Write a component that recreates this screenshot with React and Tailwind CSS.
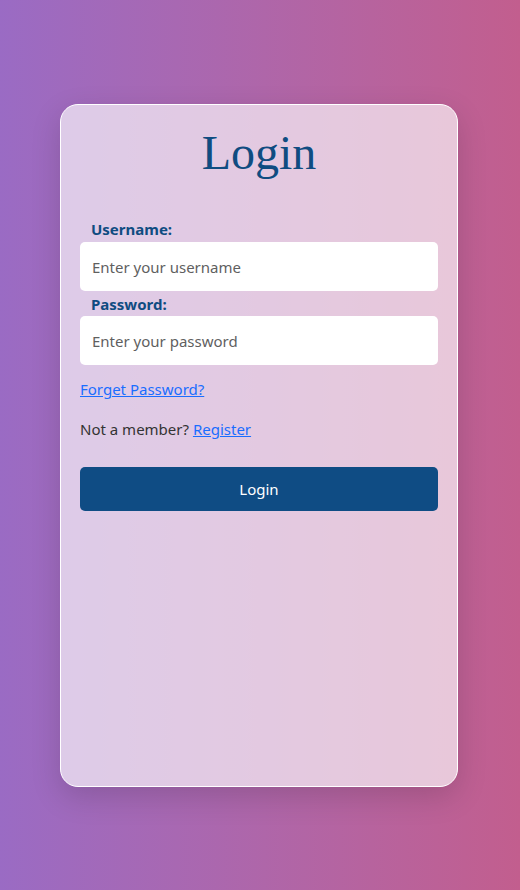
export default function App() {
  return (
    <div
      className="w-[520px] h-[890px] flex justify-center bg-gradient-to-r from-[#9a6bc4] to-[#c25e8e]"
      style={{ fontFamily: '"Noto Sans", "Open Sans", sans-serif' }}
    >
      <div className="mt-[104px] mr-[2px] w-[398px] h-[683px] rounded-[18px] border border-white bg-white/65 shadow-[0_10px_30px_rgba(0,0,0,0.15)] px-[19px] flex flex-col">
        <h1
          className="text-center text-[48px] leading-none text-[#0f4c81] mt-[24px]"
          style={{ fontFamily: '"Liberation Serif", "Times New Roman", serif' }}
        >
          Login
        </h1>
        <label className="mt-[42px] pl-[11px] text-[15px] font-bold text-[#0f4c81] leading-[20px]">
          Username:
        </label>
        <input
          className="mt-[3px] h-[49px] w-full rounded-[5px] bg-white px-[12px] text-[15px] text-[#555] placeholder:text-[#5f5f5f] outline-none"
          placeholder="Enter your username"
        />
        <label className="mt-[3px] pl-[11px] text-[15px] font-bold text-[#0f4c81] leading-[20px]">
          Password:
        </label>
        <input
          type="password"
          className="mt-[2px] h-[49px] w-full rounded-[5px] bg-white px-[12px] text-[15px] text-[#555] placeholder:text-[#5f5f5f] outline-none"
          placeholder="Enter your password"
        />
        <a href="#" className="mt-[14px] text-[15px] leading-[20px] text-[#1a6dff] underline self-start">
          Forget Password?
        </a>
        <p className="mt-[20px] text-[15px] leading-[20px] text-[#333]">
          Not a member?{" "}
          <a href="#" className="text-[#1a6dff] underline">
            Register
          </a>
        </p>
        <button className="mt-[28px] h-[44px] w-full rounded-[5px] bg-[#0f4c84] text-white text-[15px]">
          Login
        </button>
      </div>
    </div>
  );
}
